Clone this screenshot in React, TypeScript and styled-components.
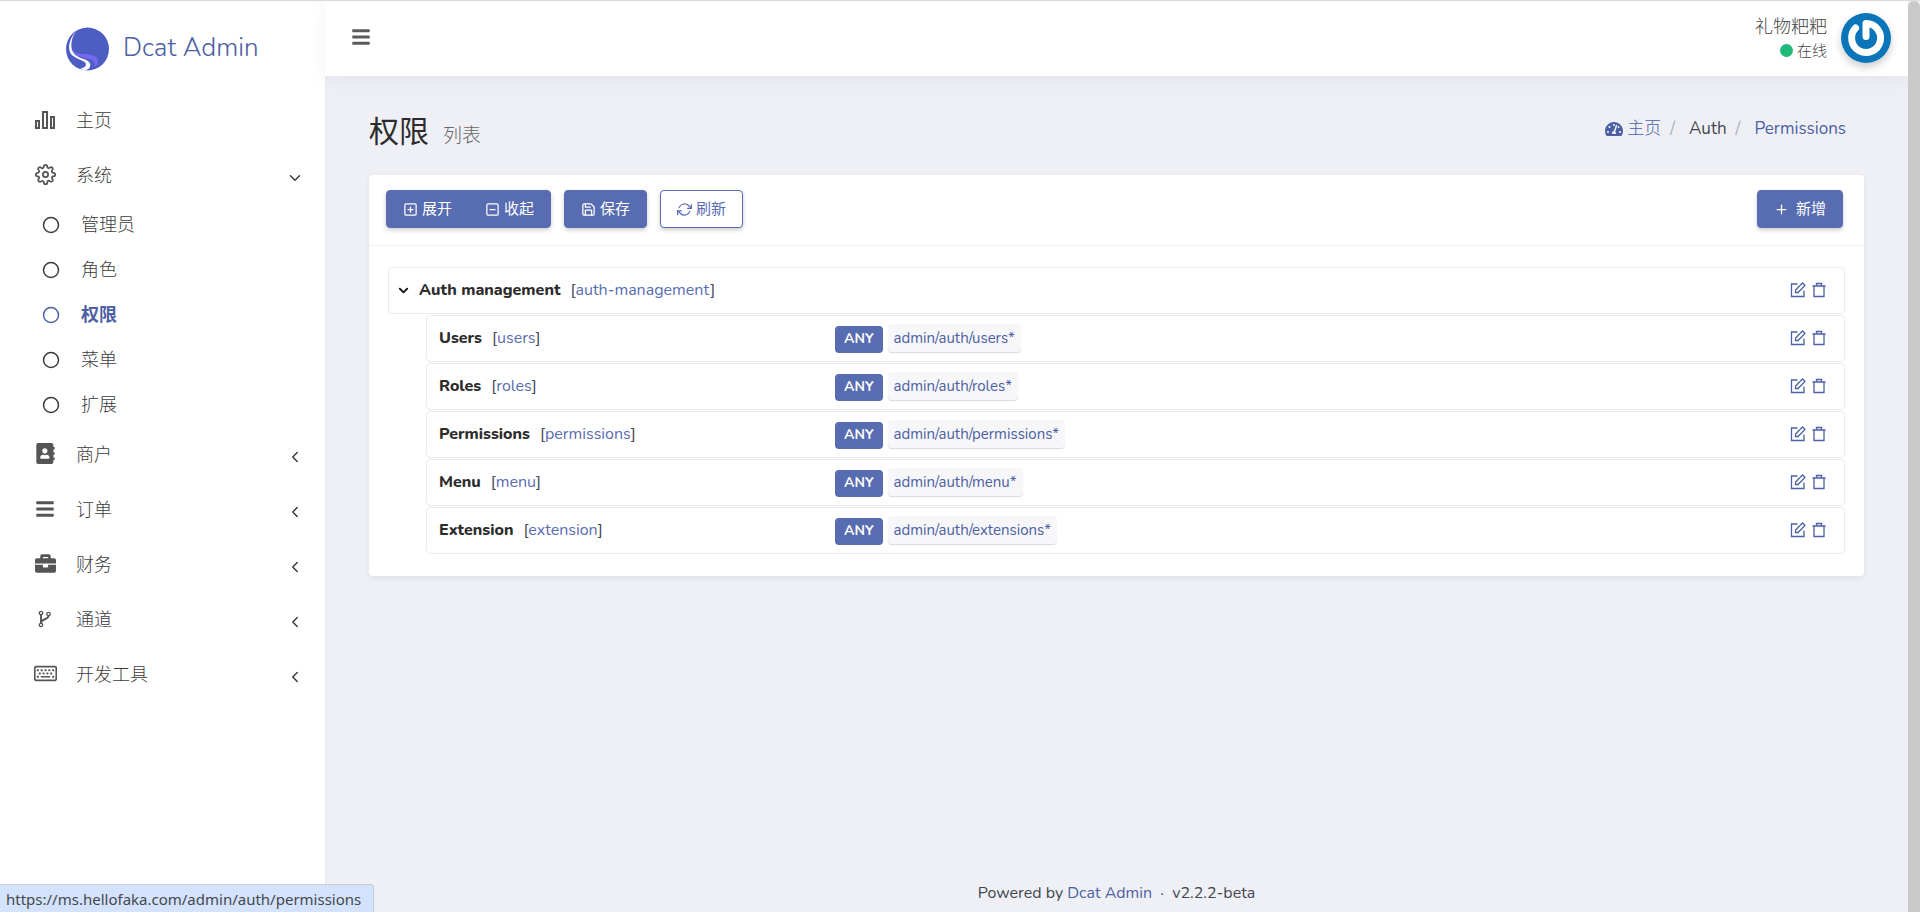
import React from 'react';
import styled, { createGlobalStyle, css } from 'styled-components';
import {
  FiChevronDown,
  FiChevronLeft,
  FiCircle,
  FiMinusSquare,
  FiPlus,
  FiPlusSquare,
  FiRefreshCw,
  FiSave,
  FiSettings,
} from 'react-icons/fi';
import {
  FaAddressBook,
  FaBars,
  FaBriefcase,
  FaRegKeyboard,
  FaTachometerAlt,
} from 'react-icons/fa';

const primary = '#586cb1';
const link = '#4c60a3';
const sans = '"Nunito", "Noto Sans", "Noto Sans CJK SC", sans-serif';

const GlobalStyle = createGlobalStyle`
  *, *::before, *::after { box-sizing: border-box; }
  body {
    margin: 0;
    background: #eff0f6;
    color: #414750;
    font: 400 16px/22px ${sans};
  }
  a { color: ${link}; text-decoration: none; }
  button { font: inherit; cursor: pointer; }
  ul, ol { list-style: none; margin: 0; padding: 0; }
  svg { display: block; flex: none; }
`;

const Shell = styled.div`
  display: flex;
  min-height: 100vh;
  border-top: 1px solid #dedede;
`;

const Sidebar = styled.aside`
  flex: none;
  width: 325px;
  background: #fff;
  box-shadow: 0 0 4px rgba(0, 0, 0, 0.06);
`;

const Brand = styled.a`
  display: flex;
  align-items: center;
  gap: 14px;
  height: 92px;
  padding: 4px 0 0 66px;
  font-size: 26px;
  font-weight: 300;
  line-height: 32px;
`;

const BrandName = styled.span`
  padding-bottom: 2px;
`;

const MenuLink = styled.a`
  display: grid;
  grid-template-columns: 26px 1fr 14px;
  column-gap: 18px;
  align-items: center;
  height: 55px;
  padding: 0 25px 0 32px;
  color: #3c3c3c;
  font-size: 18px;
  font-weight: 300;
  line-height: 26px;
`;

const MenuIcon = styled.span`
  display: flex;
  justify-content: center;
  padding-bottom: 2px;
  color: #555;
`;

const MenuArrow = styled.span`
  padding-top: 5px;
`;

const SubLink = styled.a<{ $active?: boolean }>`
  display: flex;
  align-items: center;
  gap: 21px;
  height: 45px;
  padding-left: 42px;
  color: #3c3c3c;
  font-size: 18px;
  font-weight: 300;
  line-height: 26px;
  ${(p) =>
    p.$active &&
    css`
      color: ${link};
      font-weight: 700;
    `}
`;

const SubList = styled.ul`
  margin-top: -1px;
`;

const Main = styled.div`
  flex: 1;
  min-width: 0;
  display: flex;
  flex-direction: column;
`;

const Navbar = styled.header`
  display: flex;
  align-items: center;
  justify-content: space-between;
  height: 75px;
  padding: 0 17px 2px 26px;
  background: #fff;
  box-shadow: 0 4px 20px rgba(0, 0, 0, 0.05);
`;

const Toggle = styled.button`
  padding: 0 0 2px;
  border: 0;
  background: none;
  color: #5b5b5b;
`;

const UserBox = styled.a`
  display: flex;
  align-items: center;
  gap: 14px;
  color: #444;
`;

const UserText = styled.span`
  display: flex;
  flex-direction: column;
  align-items: flex-end;
  font-size: 18px;
  font-weight: 300;
  line-height: 26px;
`;

const UserStatus = styled.span`
  display: flex;
  align-items: center;
  gap: 4px;
  font-size: 15px;
  line-height: 22px;
`;

const Dot = styled.i`
  width: 13px;
  height: 13px;
  border-radius: 50%;
  background: #21b978;
`;

const Avatar = styled.svg`
  border-radius: 50%;
  box-shadow: 0 4px 8px rgba(0, 0, 0, 0.2);
`;

const Content = styled.main`
  flex: 1;
  padding: 30px 44px 0;
`;

const ContentHeader = styled.div`
  display: flex;
  justify-content: space-between;
  height: 69px;
  padding-right: 18px;
`;

const Title = styled.h1`
  display: flex;
  align-items: baseline;
  gap: 14px;
  margin: 0;
  color: #2c2c2c;
  font-size: 30px;
  font-weight: 400;
  line-height: 54px;
`;

const Subtitle = styled.small`
  color: #666;
  font-size: 19px;
  font-weight: 300;
`;

const Crumbs = styled.ol`
  display: flex;
  height: 45px;
  align-items: center;
  font-size: 17px;
  line-height: 24px;
`;

const Crumb = styled.li`
  display: flex;
  align-items: center;
  & + &::before {
    content: '/';
    padding: 0 14px 0 9px;
    color: #a9adb8;
  }
  a {
    display: flex;
    align-items: center;
    gap: 4px;
  }
`;

const HomeText = styled.span`
  font-weight: 300;
`;

const Card = styled.section`
  background: #fff;
  border-radius: 4px;
  box-shadow: 0 2px 6px rgba(0, 0, 0, 0.07);
`;

const Toolbar = styled.div`
  display: flex;
  align-items: center;
  gap: 13px;
  height: 71px;
  padding: 0 21px 2px 17px;
  border-bottom: 1px solid #f1f2f5;
`;

const ButtonGroup = styled.div`
  display: flex;
  border-radius: 4px;
  box-shadow: 0 2px 5px rgba(0, 0, 0, 0.2);
  button { box-shadow: none; }
  button:first-child { border-radius: 4px 0 0 4px; }
  button:last-child {
    margin-left: -1px;
    border-radius: 0 4px 4px 0;
  }
`;

const Button = styled.button<{ $outline?: boolean; $end?: boolean }>`
  display: flex;
  align-items: center;
  gap: 4px;
  height: 38px;
  padding: 0 16px;
  border: 1px solid ${primary};
  border-radius: 4px;
  background: ${(p) => (p.$outline ? '#fff' : primary)};
  color: ${(p) => (p.$outline ? primary : '#fff')};
  font-size: 15px;
  line-height: 22px;
  box-shadow: 0 2px 4px rgba(0, 0, 0, 0.2);
  ${(p) =>
    p.$end &&
    css`
      gap: 7px;
      margin-left: auto;
    `}
`;

const Tree = styled.ol`
  display: flex;
  flex-direction: column;
  gap: 1px;
  padding: 21px 19px 22px;
`;

const Branch = styled.ol`
  display: flex;
  flex-direction: column;
  gap: 1px;
  padding: 1px 0 0 38px;
`;

const Row = styled.div<{ $root?: boolean }>`
  display: flex;
  align-items: center;
  height: 47px;
  padding: 0 17px 1px ${(p) => (p.$root ? '7px' : '12px')};
  border: 1px solid #e9eeee;
  border-radius: 4px;
`;

const Fold = styled.button`
  margin-right: 8px;
  padding: 0;
  border: 0;
  background: none;
  color: #111;
`;

const Label = styled.div`
  flex: none;
  width: 396px;
  white-space: nowrap;
  a { color: ${primary}; }
  b {
    margin-right: 10px;
    color: #2c2c2c;
    font-weight: 800;
  }
`;

const Method = styled.span`
  height: 27px;
  margin: 2px 5px 0 0;
  padding: 0 9px;
  border-radius: 4px;
  background: ${primary};
  color: #fff;
  font-size: 14px;
  font-weight: 700;
  line-height: 25px;
`;

const Path = styled.code`
  height: 28px;
  padding: 0 6px;
  border-radius: 4px;
  background: #f7f7f9;
  box-shadow: 0 1px 1px rgba(0, 0, 0, 0.15);
  color: ${link};
  font: 400 15px/28px ${sans};
`;

const Actions = styled.div`
  display: flex;
  gap: 5px;
  margin-left: auto;
  padding-bottom: 1px;
`;

const Footer = styled.footer`
  padding: 0 0 7px;
  text-align: center;
  font-size: 16px;
  line-height: 24px;
`;

const ScrollTrack = styled.div`
  flex: none;
  width: 12px;
  background: #c9c9c9;
  border-radius: 6px 6px 0 0;
`;

const LinkPreview = styled.div`
  position: fixed;
  left: 0;
  bottom: 0;
  height: 28px;
  padding: 0 12px 0 6px;
  border: solid #c6cbd6;
  border-width: 1px 1px 0 0;
  border-radius: 0 4px 0 0;
  background: #d3e3fd;
  color: #45484d;
  font: 400 15px/28px "Noto Sans", sans-serif;
`;

const BrandLogo = () => (
  <svg width="43" height="44" viewBox="0 0 130 130" aria-hidden="true">
    <circle cx="65" cy="65" r="65" fill="#4d5ec3" />
    <path
      fill="#7468f0"
      d="M18 64C30 84 48 78 68 81C88 84 99 92 97 105C96 113 89 119 84 119C89 108 87 100 72 95C54 90 26 92 18 64Z"
    />
    <path
      fill="#fff"
      d="M30 11C10 34 5 60 13 76C20 92 48 96 58 106C64 114 58 122 44 123C52 131 66 131 71 122C78 110 70 101 56 96C40 90 26 86 19 70C13 52 17 30 30 11Z"
    />
  </svg>
);

const BarsIcon = () => (
  <svg width="20" height="18" viewBox="0 0 20 18" fill="none" stroke="currentColor" strokeWidth="2" aria-hidden="true">
    <rect x="1" y="10" width="3" height="7" />
    <rect x="8" y="1" width="4" height="16" />
    <rect x="16" y="6" width="3" height="11" />
  </svg>
);

const ForkIcon = () => (
  <svg width="14" height="18" viewBox="0 0 14 18" fill="none" stroke="currentColor" aria-hidden="true">
    <circle cx="3" cy="3" r="1.700" strokeWidth="1.300" />
    <circle cx="3" cy="15" r="1.700" strokeWidth="1.300" />
    <circle cx="10.500" cy="4" r="1.700" strokeWidth="1.300" />
    <path d="M3 4.700V13.300M10.500 5.700C10.500 10 3 8.500 3 13" strokeWidth="1.900" />
  </svg>
);

const EditIcon = () => (
  <svg width="16" height="16" viewBox="0 0 16 16" fill="none" stroke="currentColor" strokeWidth="1.300" aria-hidden="true">
    <path d="M7.500 2H1.500V14.500H14V8.500" />
    <path d="M5.500 10.500V8L12.500 1L15 3.500L8 10.500Z" />
  </svg>
);

const TrashIcon = () => (
  <svg width="16" height="16" viewBox="0 0 16 16" fill="none" stroke="currentColor" strokeWidth="1.300" aria-hidden="true">
    <path d="M1.500 4H14.500M3 4V14.500H13V4M5.500 4V1.500H10.500V4" />
  </svg>
);

const PowerAvatar = () => (
  <Avatar width="50" height="50" viewBox="0 0 50 50" role="img" aria-label="avatar">
    <rect width="50" height="50" fill="#0a75b8" />
    <path
      d="M14.6 15A14.5 14.5 0 1 0 25 10.500V23.500"
      fill="none"
      stroke="#fff"
      strokeWidth="7"
      strokeLinecap="round"
      strokeLinejoin="round"
    />
  </Avatar>
);

const subItems = ['管理员', '角色', '权限', '菜单', '扩展'];

const lowerItems = [
  { text: '商户', icon: <FaAddressBook size={21} /> },
  { text: '订单', icon: <FaBars size={20} /> },
  { text: '财务', icon: <FaBriefcase size={21} /> },
  { text: '通道', icon: <ForkIcon /> },
  { text: '开发工具', icon: <FaRegKeyboard size={23} /> },
];

const permissions = [
  { name: 'Users', slug: 'users', path: 'admin/auth/users*' },
  { name: 'Roles', slug: 'roles', path: 'admin/auth/roles*' },
  { name: 'Permissions', slug: 'permissions', path: 'admin/auth/permissions*' },
  { name: 'Menu', slug: 'menu', path: 'admin/auth/menu*' },
  { name: 'Extension', slug: 'extension', path: 'admin/auth/extensions*' },
];

const RowActions = () => (
  <Actions>
    <a href="#edit" aria-label="编辑"><EditIcon /></a>
    <a href="#delete" aria-label="删除"><TrashIcon /></a>
  </Actions>
);

const RowLabel = ({ name, slug }: { name: string; slug: string }) => (
  <Label>
    <b>{name}</b>[<a href={`#${slug}`}>{slug}</a>]
  </Label>
);

export default function App() {
  return (
    <>
      <GlobalStyle />
      <Shell>
        <Sidebar>
          <Brand href="#home">
            <BrandLogo />
            <BrandName>Dcat Admin</BrandName>
          </Brand>
          <nav>
            <ul>
              <li>
                <MenuLink href="#home">
                  <MenuIcon><BarsIcon /></MenuIcon>
                  主页
                </MenuLink>
              </li>
              <li>
                <MenuLink href="#system">
                  <MenuIcon><FiSettings size={21} /></MenuIcon>
                  系统
                  <MenuArrow><FiChevronDown size={18} /></MenuArrow>
                </MenuLink>
                <SubList>
                  {subItems.map((text) => (
                    <li key={text}>
                      <SubLink href={`#${text}`} $active={text === '权限'}>
                        <FiCircle size={18} />
                        {text}
                      </SubLink>
                    </li>
                  ))}
                </SubList>
              </li>
              {lowerItems.map(({ text, icon }) => (
                <li key={text}>
                  <MenuLink href={`#${text}`}>
                    <MenuIcon>{icon}</MenuIcon>
                    {text}
                    <MenuArrow><FiChevronLeft size={18} /></MenuArrow>
                  </MenuLink>
                </li>
              ))}
            </ul>
          </nav>
        </Sidebar>
        <Main>
          <Navbar>
            <Toggle type="button" aria-label="菜单"><FaBars size={20} /></Toggle>
            <UserBox href="#profile">
              <UserText>
                礼物粑粑
                <UserStatus><Dot />在线</UserStatus>
              </UserText>
              <PowerAvatar />
            </UserBox>
          </Navbar>
          <Content>
            <ContentHeader>
              <Title>权限 <Subtitle>列表</Subtitle></Title>
              <Crumbs>
                <Crumb><a href="#home"><FaTachometerAlt size={18} /><HomeText>主页</HomeText></a></Crumb>
                <Crumb>Auth</Crumb>
                <Crumb><a href="#permissions">Permissions</a></Crumb>
              </Crumbs>
            </ContentHeader>
            <Card>
              <Toolbar>
                <ButtonGroup>
                  <Button type="button"><FiPlusSquare size={15} />展开</Button>
                  <Button type="button"><FiMinusSquare size={15} />收起</Button>
                </ButtonGroup>
                <Button type="button"><FiSave size={15} />保存</Button>
                <Button type="button" $outline><FiRefreshCw size={15} />刷新</Button>
                <Button type="button" $end><FiPlus size={15} />新增</Button>
              </Toolbar>
              <Tree>
                <li>
                  <Row $root>
                    <Fold type="button" aria-label="收起"><FiChevronDown size={15} strokeWidth={3} /></Fold>
                    <RowLabel name="Auth management" slug="auth-management" />
                    <RowActions />
                  </Row>
                  <Branch>
                    {permissions.map((p) => (
                      <li key={p.slug}>
                        <Row>
                          <RowLabel name={p.name} slug={p.slug} />
                          <Method>ANY</Method>
                          <Path>{p.path}</Path>
                          <RowActions />
                        </Row>
                      </li>
                    ))}
                  </Branch>
                </li>
              </Tree>
            </Card>
          </Content>
          <Footer>
            Powered by <a href="#dcat">Dcat Admin</a> &nbsp;·&nbsp; v2.2.2-beta
          </Footer>
        </Main>
        <ScrollTrack />
      </Shell>
      <LinkPreview>https://ms.hellofaka.com/admin/auth/permissions</LinkPreview>
    </>
  );
}
